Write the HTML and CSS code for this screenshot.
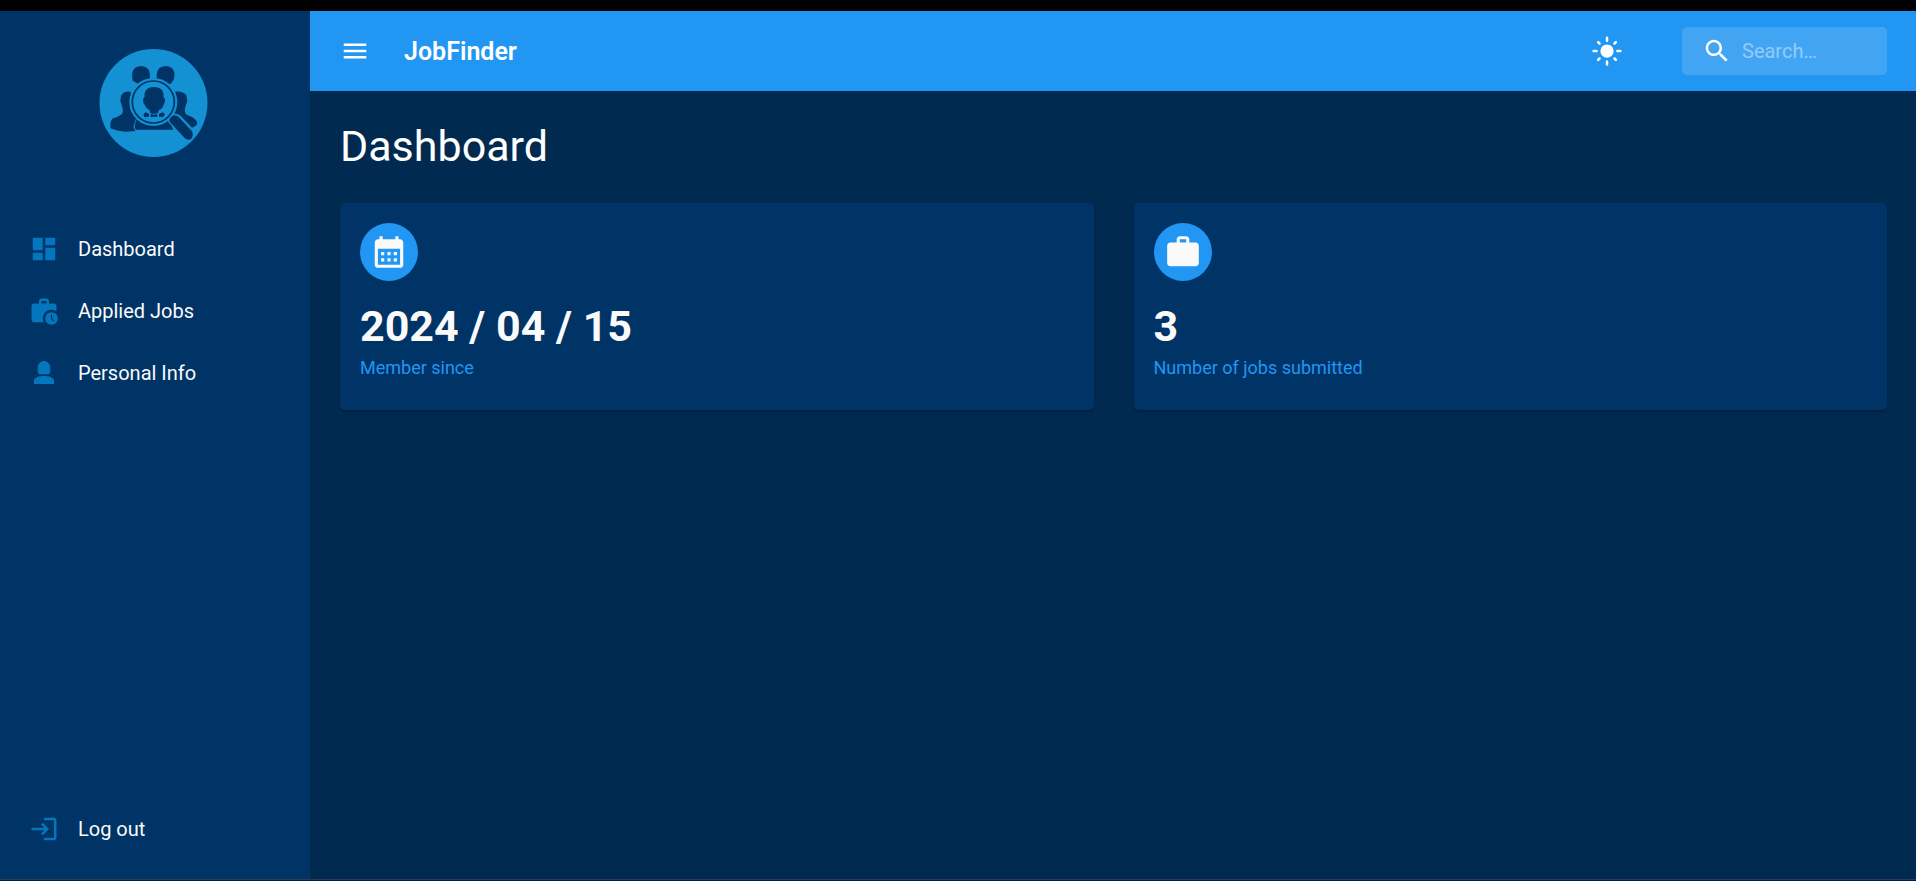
FILE: index.html
```
<!DOCTYPE html>
<html lang="en">
<head>
<meta charset="utf-8">
<meta name="viewport" content="width=device-width, initial-scale=1">
<title>JobFinder</title>
<link rel="stylesheet" href="styles.css">
</head>
<body>
<div class="app">
  <aside class="sidebar">
    <svg class="logo" viewBox="27 27 327 324" role="img" aria-label="JobFinder logo">
      <circle class="logo-disc" cx="190.500" cy="189" r="162"/>
      <g class="logo-ink">
        <path d="M128 122L126 104Q128 79 153 78Q178 79 180 104L179 130H139Q133 122 128 122Z"/>
        <path d="M201 130L200 104Q202 79 227 78Q252 79 254 104L251 120Q246 123 243 131Z"/>
        <path d="M121 155Q101 152 93 168L91 184L96 198Q101 213 96 222Q84 231 69 235Q58 245 62 265Q80 274 108 275L136 273L130 262L139 232L150 200Z"/>
        <path d="M250 155Q281 152 289 166L292 184L286 200Q282 213 288 223L307 232Q321 240 322 252Q317 260 306 263L272 227Q262 219 240 221Z"/>
        <path d="M140 236H236L250 269H137Q131 262 140 236Z"/>
      </g>
      <circle class="logo-disc" cx="190" cy="186" r="72"/>
      <path class="logo-handle" d="M244 230Q254 221 266 231L306 274Q312 286 304 296Q293 303 284 294L240 247Q235 238 244 230Z"/>
      <g class="logo-ink">
        <path d="M191 141C170 141 162 155 164 170Q154 180 164 194Q168 206 179 211L181 219L191 222L204 219L206 211Q218 206 221 194Q230 179 220 170C223 154 214 141 191 141Z"/>
        <path d="M165 217L177 221V230L164 232L160 226ZM182 222L192 224L202 222V231L192 230L182 232ZM207 221L219 217L225 224L218 232L207 230Z"/>
      </g>
      <circle class="logo-ring" cx="190" cy="186" r="63"/>
    </svg>
    <nav class="menu" aria-label="Main">
      <a class="item" href="#dashboard">
        <svg class="icon" viewBox="0 0 24 24" aria-hidden="true"><path d="M3 13h8V3H3v10zm0 8h8v-6H3v6zm10 0h8V11h-8v10zm0-18v6h8V3h-8z"/></svg>
        Dashboard
      </a>
      <a class="item" href="#applied">
        <svg class="icon" viewBox="0 0 24 24" aria-hidden="true"><path d="M18 11c1.490 0 2.870.47 4 1.260V8c0-1.110-.89-2-2-2h-4V4c0-1.110-.89-2-2-2h-4c-1.110 0-2 .89-2 2v2H4c-1.110 0-1.990.89-1.990 2L2 19c0 1.110.89 2 2 2h7.680A6.995 6.995 0 0 1 18 11zm-8-7h4v2h-4V4z"/><path d="M18 13c-2.760 0-5 2.240-5 5s2.240 5 5 5 5-2.240 5-5-2.240-5-5-5zm1.650 7.350L17.500 18.200V15h1v2.790l1.850 1.850-.7.710z"/></svg>
        Applied Jobs
      </a>
      <a class="item" href="#personal">
        <svg class="icon" viewBox="0 0 24 24" aria-hidden="true"><path d="M12 2.200C9.400 2.500 7.600 4.400 7.100 6.500L6.900 10.500Q7 12.900 9.300 13H14.700Q17 12.900 17.100 10.500L16.900 6.500C16.400 4.400 14.600 2.500 12 2.200zM4 20.800V18C4 15.500 8.500 14.400 12 14.400S20 15.500 20 18v2.800Z"/></svg>
        Personal Info
      </a>
    </nav>
    <a class="item" href="#logout">
      <svg class="icon" viewBox="0 0 24 24" aria-hidden="true"><path d="M11 7 9.600 8.400l2.600 2.600H2v2h10.200l-2.600 2.600L11 17l5-5-5-5zm9 12h-8v2h8c1.100 0 2-.9 2-2V5c0-1.100-.9-2-2-2h-8v2h8v14z"/></svg>
      Log out
    </a>
  </aside>
  <div class="page">
    <header class="topbar">
      <button class="icon-button" type="button" aria-label="Toggle menu">
        <svg class="icon" viewBox="0 0 24 24" aria-hidden="true"><path d="M3 18h18v-2H3v2zm0-5h18v-2H3v2zm0-7v2h18V6H3z"/></svg>
      </button>
      <span class="brand">JobFinder</span>
      <button class="icon-button theme" type="button" aria-label="Toggle theme">
        <svg class="icon" viewBox="0 0 24 24" aria-hidden="true"><circle cx="12" cy="12" r="5.300"/><path class="rays" d="M12 1.300v2.400M12 20.300v2.400M1.300 12h2.400M20.300 12h2.400M4.900 4.900l1.100 1.100M18 18l1.100 1.100M4.900 19.100l1.100-1.100M18 6l1.100-1.100"/></svg>
      </button>
      <label class="search">
        <svg class="icon" viewBox="0 0 24 24" aria-hidden="true"><path d="M15.500 14h-.79l-.28-.27C15.410 12.590 16 11.110 16 9.500 16 5.910 13.090 3 9.500 3S3 5.910 3 9.500 5.910 16 9.500 16c1.610 0 3.090-.59 4.230-1.570l.27.28v.79l5 4.990L20.490 19l-4.990-5zm-6 0C7.010 14 5 11.990 5 9.500S7.010 5 9.500 5 14 7.010 14 9.500 11.990 14 9.500 14z"/></svg>
        <input class="search-input" type="text" placeholder="Search…" aria-label="Search">
      </label>
    </header>
    <main class="content">
      <h1 class="title">Dashboard</h1>
      <div class="cards">
        <section class="card">
          <span class="badge"><svg class="badge-icon" viewBox="0 0 24 24" aria-hidden="true"><path d="M19 4h-1V2h-2v2H8V2H6v2H5c-1.110 0-1.990.9-1.990 2L3 20c0 1.100.89 2 2 2h14c1.100 0 2-.9 2-2V6c0-1.100-.9-2-2-2zm0 16H5V10h14v10zM9 14H7v-2h2v2zm4 0h-2v-2h2v2zm4 0h-2v-2h2v2zm-8 4H7v-2h2v2zm4 0h-2v-2h2v2zm4 0h-2v-2h2v2z"/></svg></span>
          <p class="value">2024 / 04 / 15</p>
          <p class="caption">Member since</p>
        </section>
        <section class="card">
          <span class="badge"><svg class="badge-icon" viewBox="0 0 24 24" aria-hidden="true"><path d="M20 6h-4V4c0-1.110-.89-2-2-2h-4c-1.110 0-2 .89-2 2v2H4c-1.110 0-1.990.89-1.990 2L2 19c0 1.110.89 2 2 2h16c1.110 0 2-.89 2-2V8c0-1.110-.89-2-2-2zm-6 0h-4V4h4v2z"/></svg></span>
          <p class="value">3</p>
          <p class="caption">Number of jobs submitted</p>
        </section>
      </div>
    </main>
  </div>
</div>
</body>
</html>
```

FILE: styles.css
```
* {
  box-sizing: border-box;
}

body {
  margin: 0;
  background: #002a50;
  color: #fafafa;
  font-family: Roboto, "Liberation Sans", sans-serif;
  font-size: 20px;
  line-height: 30px;
}

.app {
  display: flex;
  min-height: 100vh;
  border-top: 11px solid #000;
  border-bottom: 1px solid #001f3d;
}

.sidebar {
  display: flex;
  flex-direction: column;
  flex: 0 0 310px;
  padding: 38px 0 19px;
  background: #003366;
  border-bottom: 1px solid #33395c;
}

.logo {
  width: 109px;
  height: 108px;
  margin-left: 99px;
}

.logo-disc {
  fill: #1391d3;
}

.logo-ink {
  fill: #003366;
}

.logo-handle {
  fill: #003366;
  stroke: #1391d3;
  stroke-width: 8px;
  paint-order: stroke;
}

.logo-ring {
  fill: none;
  stroke: #003366;
  stroke-width: 5px;
}

.menu {
  flex: 1;
  padding-top: 61px;
}

.item {
  display: flex;
  align-items: center;
  gap: 19px;
  padding: 16px 29px;
  color: #fafafa;
  text-decoration: none;
}

.icon {
  display: block;
  flex: none;
  width: 30px;
  height: 30px;
  fill: currentColor;
}

.item .icon {
  color: #0277bd;
}

.page {
  flex: 1;
  min-width: 0;
  border-bottom: 1px solid #33395c;
}

.topbar {
  display: flex;
  align-items: center;
  height: 80px;
  padding: 0 29px 0 30px;
  background: #2196f3;
  color: #fff;
}

.icon-button {
  padding: 0;
  border: 0;
  background: none;
  color: inherit;
}

.brand {
  margin-left: 34px;
  font-size: 25px;
  font-weight: 600;
  line-height: 32px;
  padding-top: 2px;
}

.theme {
  margin-left: auto;
  margin-right: 60px;
}

.rays {
  fill: none;
  stroke: currentColor;
  stroke-width: 2px;
  stroke-linecap: round;
}

.search {
  display: flex;
  align-items: center;
  gap: 10px;
  width: 205px;
  height: 48px;
  padding: 0 20px;
  border-radius: 5px;
  background: rgba(255, 255, 255, 0.15);
}

.search-input {
  flex: 1;
  min-width: 0;
  padding: 0;
  border: 0;
  outline: 0;
  background: none;
  color: inherit;
  font: inherit;
}

.search-input::placeholder {
  color: #fff;
  opacity: 0.42;
}

.content {
  padding: 29px 29px 29px 30px;
}

.title {
  margin: 0 0 31px;
  font-size: 43px;
  font-weight: 400;
  line-height: 52px;
  color: #fff;
}

.cards {
  display: grid;
  grid-template-columns: 1fr 1fr;
  gap: 40px;
}

.card {
  padding: 20px 20px 29px;
  border-radius: 5px;
  background: #003366;
  box-shadow: 0 2px 2px rgba(0, 0, 0, 0.25);
}

.badge {
  display: flex;
  align-items: center;
  justify-content: center;
  width: 58px;
  height: 58px;
  border-radius: 50%;
  background: #2196f3;
}

.badge-icon {
  width: 38px;
  height: 38px;
  fill: #fafafa;
}

.value {
  margin: 19px 0 2px;
  font-size: 43px;
  font-weight: 700;
  line-height: 52px;
}

.caption {
  margin: 0;
  color: #2196f3;
  font-size: 18px;
  line-height: 27px;
}
```
